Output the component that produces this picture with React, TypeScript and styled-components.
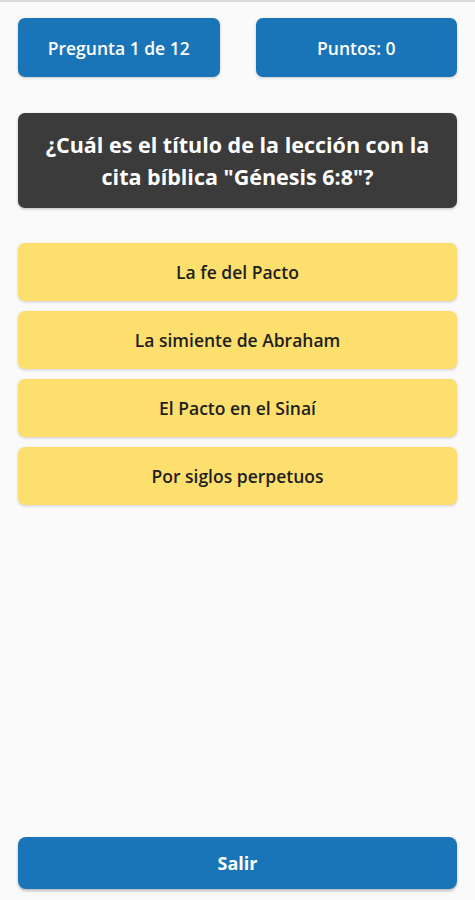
import React from "react";
import styled, { createGlobalStyle } from "styled-components";

const Global = createGlobalStyle`
  html, body { margin: 0; padding: 0; background: #fafafa; }
  body { font-family: "Open Sans", "Noto Sans", sans-serif; }
`;

const Page = styled.div`
  box-sizing: border-box;
  height: 900px;
  border-top: 2px solid #dcdcdc;
  padding: 16px 18px 11px;
  display: flex;
  flex-direction: column;
`;

const TopRow = styled.div`
  display: grid;
  grid-template-columns: 1fr 1fr;
  gap: 36px;
`;

const Badge = styled.div`
  height: 59px;
  border-radius: 7px;
  background: #1a75b8;
  color: #fff;
  font-weight: 600;
  font-size: 17.5px;
  display: flex;
  align-items: center;
  justify-content: center;
  box-shadow: 0 1px 3px rgba(0, 0, 0, 0.2);
`;

const Question = styled.div`
  margin-top: 36px;
  height: 95px;
  box-sizing: border-box;
  border-radius: 7px;
  background: #3b3b3b;
  color: #fff;
  font-weight: 700;
  font-size: 21.5px;
  line-height: 32px;
  text-align: center;
  display: flex;
  align-items: center;
  justify-content: center;
  padding: 0 16px;
  box-shadow: 0 1px 3px rgba(0, 0, 0, 0.25);
`;

const Options = styled.div`
  margin-top: 35px;
  display: flex;
  flex-direction: column;
  gap: 10px;
`;

const Option = styled.button`
  height: 58px;
  border: none;
  border-radius: 7px;
  background: #fddf6e;
  color: #1e1e1e;
  font-family: inherit;
  font-weight: 600;
  font-size: 17.5px;
  box-shadow: 0 1px 3px rgba(0, 0, 0, 0.18);
  cursor: pointer;
`;

const Spacer = styled.div`
  flex: 1;
`;

const Exit = styled.button`
  height: 52px;
  border: none;
  border-radius: 8px;
  background: #1a75b8;
  color: #fff;
  font-family: inherit;
  font-weight: 700;
  font-size: 18px;
  box-shadow: 0 2px 3px rgba(0, 0, 0, 0.25);
`;

const options = [
  "La fe del Pacto",
  "La simiente de Abraham",
  "El Pacto en el Sinaí",
  "Por siglos perpetuos",
];

export default function App() {
  return (
    <>
      <Global />
      <Page>
        <TopRow>
          <Badge>Pregunta 1 de 12</Badge>
          <Badge>Puntos: 0</Badge>
        </TopRow>
        <Question>¿Cuál es el título de la lección con la cita bíblica "Génesis 6:8"?</Question>
        <Options>
          {options.map((o) => (
            <Option key={o}>{o}</Option>
          ))}
        </Options>
        <Spacer />
        <Exit>Salir</Exit>
      </Page>
    </>
  );
}
